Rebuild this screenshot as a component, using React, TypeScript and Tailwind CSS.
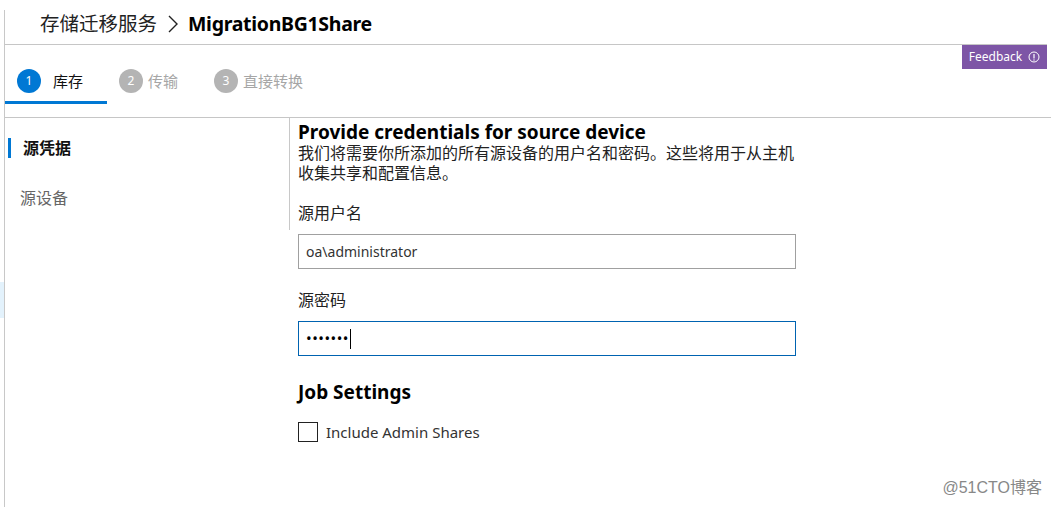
import React from "react";

const font = { fontFamily: '"Noto Sans", "Noto Sans CJK SC", sans-serif' };

function Step({ n, label, active, gap }: { n: number; label: string; active?: boolean; gap: string }) {
  return (
    <div className="flex items-center">
      <div
        className={
          "w-[24px] h-[24px] rounded-full flex items-center justify-center text-[12px] text-white " +
          (active ? "bg-[#0078d4]" : "bg-[#b4b4b4]")
        }
      >
        {n}
      </div>
      <span className={gap + " text-[15px] " + (active ? "text-[#111]" : "text-[#a6a6a6]")}>{label}</span>
    </div>
  );
}

export default function App() {
  return (
    <div className="relative w-[1051px] h-[507px] bg-white overflow-hidden" style={font}>
      <div className="absolute left-0 top-[282px] w-[4px] h-[36px] bg-[#e3f2fc]" />
      <div className="pl-[4px] pt-[10px] h-full">
        <div className="border-l border-[#c8c8c8] h-full flex flex-col">
          {/* header */}
          <div className="h-[35px] border-b border-[#c6c6c6] flex items-start pl-[35px] mr-[4px]">
            <div className="flex items-center h-[28px]">
              <span className="text-[19.5px] text-[#222]">存储迁移服务</span>
              <svg width="14" height="22" viewBox="0 0 14 22" className="ml-[9px] mr-[8px]">
                <path d="M3 3 L11 11 L3 19" fill="none" stroke="#222" strokeWidth="1.4" />
              </svg>
              <span className="text-[19.5px] font-bold text-black tracking-[-0.3px]">MigrationBG1Share</span>
            </div>
          </div>
          {/* tabs */}
          <div className="relative h-[73px] border-b border-[#c6c6c6]">
            <div className="absolute right-[4px] top-0 h-[24px] w-[85px] bg-[#7d55a6] flex items-center justify-center gap-[6px] text-white text-[12px]">
              <span>Feedback</span>
              <svg width="12" height="12" viewBox="0 0 12 12">
                <circle cx="6" cy="6" r="5" fill="none" stroke="white" strokeWidth="1" />
                <path d="M6 3 V7.5" stroke="white" strokeWidth="1.2" />
                <circle cx="6" cy="9" r="0.7" fill="white" />
              </svg>
            </div>
            <div className="flex items-start h-full">
              <div className="w-[102px] h-full flex flex-col">
                <div className="flex-1 pl-[12px] pt-[24px]">
                  <Step n={1} label="库存" active gap="ml-[12px]" />
                </div>
                <div className="h-[3px] bg-[#0078d4] mb-[13px]" />
              </div>
              <div className="pl-[12px] pt-[24px]">
                <Step n={2} label="传输" gap="ml-[5px]" />
              </div>
              <div className="pl-[36px] pt-[24px]">
                <Step n={3} label="直接转换" gap="ml-[5px]" />
              </div>
            </div>
          </div>
          {/* body */}
          <div className="flex flex-1">
            <div className="w-[285px] border-r border-[#c8c8c8] h-[112px] pt-[20px]">
              <div className="flex items-center h-[20px]">
                <div className="ml-[3px] w-[3px] h-[20px] bg-[#0078d4]" />
                <span className="ml-[12px] text-[16px] font-bold text-[#111]">源凭据</span>
              </div>
              <div className="mt-[28px] pl-[15px] text-[16px] text-[#666]">源设备</div>
            </div>
            <div className="pl-[8px] pt-[4px] w-[506px]">
              <div className="text-[19px] font-bold text-black leading-[20px]">Provide credentials for source device</div>
              <div className="mt-[1px] text-[16px] text-[#222] leading-[20px]">
                我们将需要你所添加的所有源设备的用户名和密码。这些将用于从主机
                <br />
                收集共享和配置信息。
              </div>
              <div className="mt-[19px] text-[16px] text-[#222] leading-[22px]">源用户名</div>
              <div className="mt-[10px] h-[35px] border border-[#a0a0a0] flex items-center px-[7px] text-[14px] text-[#333]">
                oa\administrator
              </div>
              <div className="mt-[20px] text-[16px] text-[#222] leading-[22px]">源密码</div>
              <div className="mt-[10px] h-[35px] border border-[#0063b1] flex items-center px-[7px] text-[14px] text-black">
                <span className="tracking-[0.5px] text-[15px]">•••••••</span>
                <span className="ml-[1px] w-[1px] h-[20px] bg-black" />
              </div>
              <div className="mt-[25px] text-[19px] font-bold text-black leading-[22px]">Job Settings</div>
              <div className="mt-[18px] flex items-center">
                <div className="w-[20px] h-[20px] border border-[#222]" />
                <span className="ml-[8px] text-[15px] text-[#333]">Include Admin Shares</span>
              </div>
            </div>
          </div>
        </div>
      </div>
      <div className="absolute right-[9px] bottom-[9px] text-[16px] leading-[20px] text-[#888]" style={{ fontFamily: '"Liberation Sans", "Noto Sans CJK SC", sans-serif' }}>
        @51CTO博客
      </div>
    </div>
  );
}
